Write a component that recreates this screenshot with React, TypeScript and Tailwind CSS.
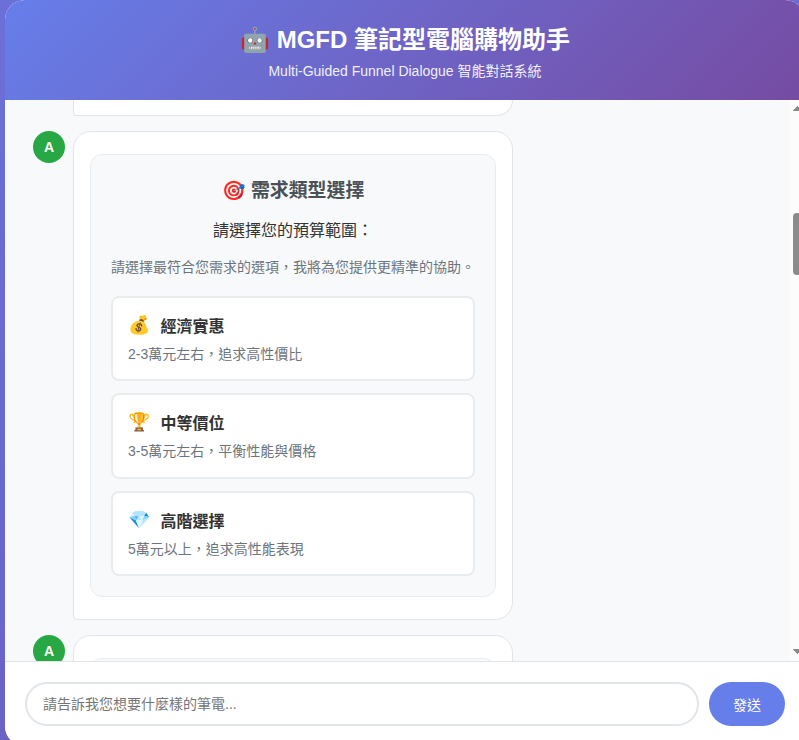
import type { ReactNode } from 'react';

const options = [
  { icon: '💰', title: '經濟實惠', desc: '2-3萬元左右，追求高性價比' },
  { icon: '🏆', title: '中等價位', desc: '3-5萬元左右，平衡性能與價格' },
  { icon: '💎', title: '高階選擇', desc: '5萬元以上，追求高性能表現' },
];

function Avatar() {
  return (
    <div className="mr-2 flex h-8 w-8 shrink-0 items-center justify-center rounded-full bg-[#28a745] text-[14px] font-bold leading-none text-white">
      A
    </div>
  );
}

function Card({ children }: { children?: ReactNode }) {
  return (
    <div className="my-[10px] h-[443px] rounded-[12px] border border-[#e9ecef] bg-[#f8f9fa] px-5 pt-[21px]">
      {children}
    </div>
  );
}

function BudgetQuestion() {
  return (
    <>
      <div className="text-center">
        <h3 className="h-[30px] whitespace-nowrap text-[18.9px] font-bold leading-[30px] text-[#495057]">🎯 需求類型選擇</h3>
        <p className="mt-[13px] h-[24px] whitespace-nowrap text-[16px] leading-[24px] text-[#333]">請選擇您的預算範圍：</p>
        <p className="mt-[13px] h-[22px] whitespace-nowrap text-[14px] leading-[22px] text-[#6c757d]">請選擇最符合您需求的選項，我將為您提供更精準的協助。</p>
      </div>
      <div className="mt-[18px] flex flex-col gap-[12px]">
        {options.map((o) => (
          <div key={o.title} className="h-[85.4px] rounded-[8px] border-2 border-[#e9ecef] bg-white px-[15px] pt-[13px]">
            <div className="flex h-[30px] items-center">
              <span className="mr-[10px] w-[22.4px] whitespace-nowrap pb-[2px] text-[18px] leading-[30px]">{o.icon}</span>
              <span className="pt-[2px] text-[16px] font-bold leading-[30px] text-[#333]">{o.title}</span>
            </div>
            <div className="mt-[2px] text-[14px] leading-[22px] text-[#6c757d]">{o.desc}</div>
          </div>
        ))}
      </div>
    </>
  );
}

function Bubble({ children }: { children?: ReactNode }) {
  return (
    <div className="w-[440px] rounded-[18px] rounded-bl-[4px] border border-[#e1e5e9] bg-white px-4 py-3">{children}</div>
  );
}

export default function App() {
  return (
    <div
      lang="zh-TW"
      className="h-[740px] w-[799px] overflow-hidden bg-linear-[160deg,#6b70d8,#6a5fbd] pl-[5px] font-['Liberation_Sans','Noto_Sans_CJK_TC',sans-serif]"
    >
      <div className="flex h-[746px] w-[800px] flex-col overflow-hidden rounded-[20px] bg-white">
        <header className="h-[100px] shrink-0 bg-linear-[135deg,#667eea,#764ba2] pt-[22px] text-center text-white">
          <h1 className="h-[35px] text-[24px] font-bold leading-[35px]">🤖 MGFD 筆記型電腦購物助手</h1>
          <p className="mt-[3px] h-[22px] text-[14px] leading-[22px] opacity-90">Multi-Guided Funnel Dialogue 智能對話系統</p>
        </header>
        <main className="flex h-[561px] shrink-0 overflow-hidden bg-[#f8f9fa]">
          <div className="flex-1 overflow-hidden pl-7">
            <div className="ml-10 h-[16px] w-[440px] rounded-bl-[4px] rounded-br-[18px] border border-t-0 border-[#e1e5e9] bg-white" />
            <div className="mt-[15px] flex items-start">
              <Avatar />
              <Bubble>
                <Card>
                  <BudgetQuestion />
                </Card>
              </Bubble>
            </div>
            <div className="mt-[15px] flex items-start">
              <Avatar />
              <Bubble>
                <Card />
              </Bubble>
            </div>
          </div>
          <div className="flex w-[15px] shrink-0 flex-col items-center bg-[#fcfcfc]">
            <svg className="mt-[6px] shrink-0" width="9" height="5" viewBox="0 0 9 5" shapeRendering="crispEdges"><path d="M0 5 4.5 0 9 5Z" fill="#8b8b8b" /></svg>
            <div className="mt-[102px] h-[62px] w-[9px] shrink-0 rounded-[4px] bg-[#8b8b8b]" />
            <svg className="mt-auto mb-[7px] shrink-0" width="9" height="5" viewBox="0 0 9 5" shapeRendering="crispEdges"><path d="M0 0 4.5 5 9 0Z" fill="#8b8b8b" /></svg>
          </div>
        </main>
        <footer className="flex h-[85px] shrink-0 gap-[10px] border-t border-[#e1e5e9] bg-white p-5">
          <input
            className="h-[44px] min-w-0 flex-1 rounded-[22px] border-2 border-[#e1e5e9] bg-white px-4 text-[14px] outline-none placeholder:text-[#757575]"
            placeholder="請告訴我您想要什麼樣的筆電..."
          />
          <button className="h-[44px] w-[76px] rounded-[22px] bg-[#667eea] pt-[2px] text-[14px] text-white">發送</button>
        </footer>
      </div>
    </div>
  );
}
